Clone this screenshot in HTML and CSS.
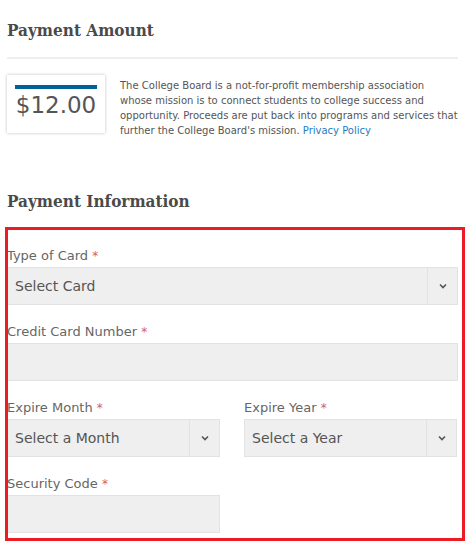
FILE: index.html
```html
<!DOCTYPE html>
<html lang="en">
<head>
    <meta charset="UTF-8">
    <meta name="viewport" content="width=device-width, initial-scale=1.0">
    <title>Payment</title>
    <link rel="stylesheet" href="styles.css">
</head>
<body>
    <div class="page">
        <h2 class="section-title">Payment Amount</h2>
        <hr class="divider">

        <div class="amount-row">
            <div class="amount-box">
                <div class="amount-bar"></div>
                <div class="amount-value">$12.00</div>
            </div>
            <p class="amount-note">
                The College Board is a not-for-profit membership association<br>
                whose mission is to connect students to college success and<br>
                opportunity. Proceeds are put back into programs and services that<br>
                further the College Board's mission. <a href="#">Privacy Policy</a>
            </p>
        </div>

        <h2 class="section-title info-title">Payment Information</h2>

        <div class="payment-form">
            <div class="field">
                <label>Type of Card <span class="req">*</span></label>
                <div class="select">
                    <span class="select-text">Select Card</span>
                    <span class="select-arrow">
                        <svg width="8" height="6" viewBox="0 0 8 6"><path d="M1 1.5 L4 4.5 L7 1.5" fill="none" stroke="#555" stroke-width="1.6"/></svg>
                    </span>
                </div>
            </div>

            <div class="field">
                <label>Credit Card Number <span class="req">*</span></label>
                <div class="text-input"></div>
            </div>

            <div class="field-row">
                <div class="field">
                    <label>Expire Month <span class="req">*</span></label>
                    <div class="select">
                        <span class="select-text">Select a Month</span>
                        <span class="select-arrow">
                            <svg width="8" height="6" viewBox="0 0 8 6"><path d="M1 1.5 L4 4.5 L7 1.5" fill="none" stroke="#555" stroke-width="1.6"/></svg>
                        </span>
                    </div>
                </div>
                <div class="field">
                    <label>Expire Year <span class="req">*</span></label>
                    <div class="select">
                        <span class="select-text">Select a Year</span>
                        <span class="select-arrow">
                            <svg width="8" height="6" viewBox="0 0 8 6"><path d="M1 1.5 L4 4.5 L7 1.5" fill="none" stroke="#555" stroke-width="1.6"/></svg>
                        </span>
                    </div>
                </div>
            </div>

            <div class="field-row">
                <div class="field">
                    <label>Security Code <span class="req">*</span></label>
                    <div class="text-input"></div>
                </div>
            </div>

            <!-- highlight frame drawn over the form -->
            <div class="highlight"></div>
        </div>
    </div>
</body>
</html>
```

FILE: styles.css
```css
body {
    margin: 0;
    background: #fff;
    font-family: "DejaVu Sans", Verdana, sans-serif;
    color: #555;
}

.page {
    width: 451px;
    padding: 18px 0 0 7px;
}

.section-title {
    font-family: "DejaVu Serif", serif;
    font-weight: bold;
    font-stretch: semi-condensed;
    font-size: 17px;
    line-height: 24px;
    color: #4a4a4a;
    margin: 0;
}

.divider {
    border: none;
    border-top: 2px solid #eee;
    margin: 15px 0 16px;
}

.amount-row {
    display: flex;
    align-items: flex-start;
    gap: 15px;
}

.amount-box {
    width: 82px;
    padding: 10px 8px 12px;
    background: #fff;
    box-shadow: 0 0 3px rgba(0,0,0,0.25);
    flex-shrink: 0;
}

.amount-bar {
    height: 4px;
    background: #006298;
}

.amount-value {
    font-size: 23px;
    line-height: 32px;
    color: #555;
    text-align: center;
}

.amount-note {
    margin: 3px 0 0;
    font-size: 10px;
    line-height: 15px;
    white-space: nowrap;
    color: #555;
}

.amount-note a {
    color: #1f7bc1;
    text-decoration: none;
}

.info-title {
    margin-top: 51px;
}

.payment-form {
    position: relative;
    margin-top: 14px;
    padding-top: 21px;
}

.field {
    margin-bottom: 19px;
}

.field label {
    display: block;
    font-size: 13px;
    line-height: 16px;
    color: #666;
    margin-bottom: 3px;
}

.req {
    color: #d0606a;
    font-size: 12px;
}

.select, .text-input {
    height: 36px;
    background: #efefef;
    border: 1px solid #e2e2e2;
}

.select {
    display: flex;
    align-items: center;
}

.select-text {
    flex: 1;
    padding-left: 7px;
    font-size: 14px;
    color: #555;
}

.select-arrow {
    width: 29px;
    height: 36px;
    border-left: 1px solid #e2e2e2;
    display: flex;
    align-items: center;
    justify-content: center;
}

.field-row {
    display: grid;
    grid-template-columns: 213px 213px;
    gap: 24px;
}

.highlight {
    position: absolute;
    left: -2px;
    top: 0;
    width: 454px;
    height: 308px;
    border: 3px solid #ed1c24;
}
```
